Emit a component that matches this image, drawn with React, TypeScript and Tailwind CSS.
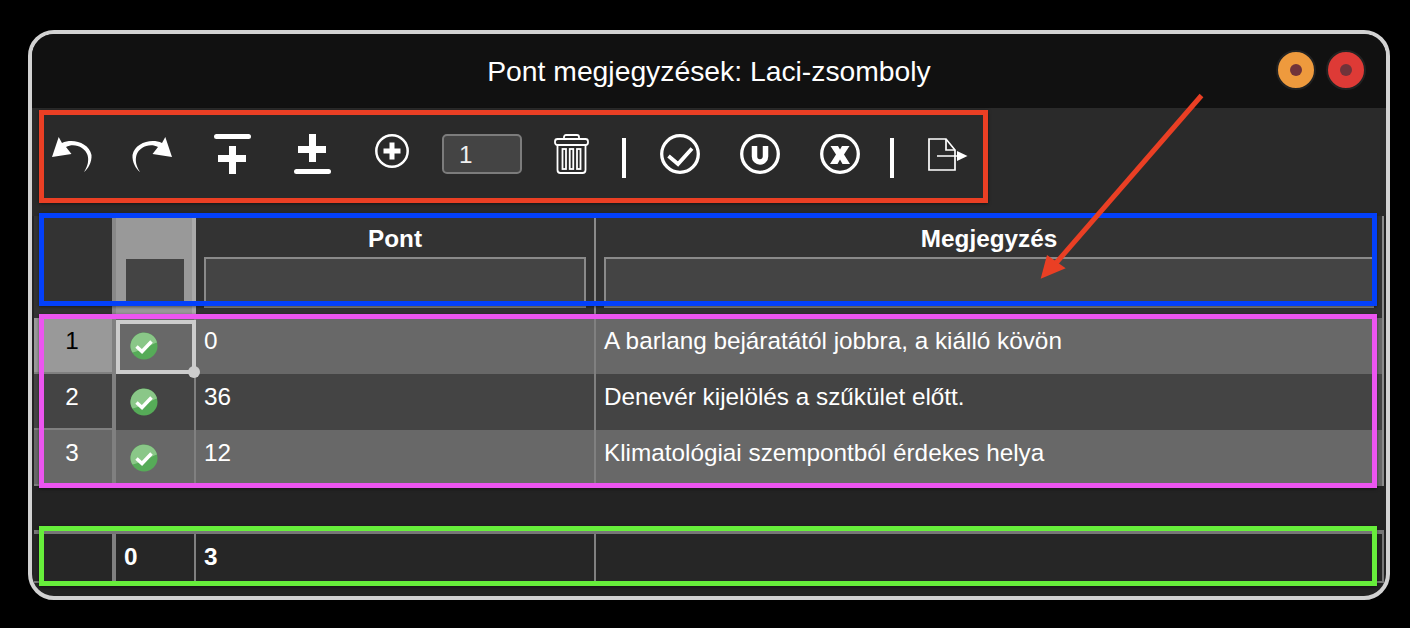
const font = "font-['Liberation_Sans',Arial,sans-serif]";

function Undo({ flip }: { flip?: boolean }) {
  return (
    <svg width="40" height="35" viewBox="0 0 40 35" className={flip ? '-scale-x-100' : ''}>
      <path d="M6.700 0 L10 6 C21 1 37 6 39.500 18 C40 25 36 32 32 35 C36 29 37 23 35.500 18 C33 10 22 5.500 14 10 L19.500 17 L0 20 Z" fill="#fff" />
    </svg>
  );
}

function InsertPlus({ flip }: { flip?: boolean }) {
  return (
    <svg width="37" height="40" viewBox="0 0 37 40" className={flip ? '-scale-y-100' : ''}>
      <rect x="0" y="0" width="37" height="5" rx="2.500" fill="#fff" />
      <path d="M15 12 h7 v9 h10 v7 h-10 V40 h-7 V28 H4 v-7 h11 Z" fill="#fff" />
    </svg>
  );
}

function CirclePlus() {
  return (
    <svg width="34" height="34" viewBox="0 0 34 34">
      <circle cx="17" cy="17" r="15.700" fill="none" stroke="#fff" strokeWidth="2.500" />
      <path d="M14.500 8.500 h5 v6 h6 v5 h-6 v6 h-5 v-6 h-6 v-5 h6 Z" fill="#fff" />
    </svg>
  );
}

function Trash() {
  return (
    <svg width="35" height="40" viewBox="0 0 35 40" fill="none" stroke="#fff" strokeWidth="1.800">
      <path d="M10 5 V3 a2 2 0 0 1 2 -2 h11 a2 2 0 0 1 2 2 V5" />
      <rect x="1" y="5" width="33" height="6" rx="2.500" />
      <path d="M3.500 11 V36 a3 3 0 0 0 3 3 H28.500 a3 3 0 0 0 3 -3 V11" />
      <rect x="8.500" y="15" width="3.500" height="20" />
      <rect x="15.750" y="15" width="3.500" height="20" />
      <rect x="23" y="15" width="3.500" height="20" />
    </svg>
  );
}

function CircleMark({ children }: { children: React.ReactNode }) {
  return (
    <svg width="40" height="40" viewBox="0 0 40 40">
      <circle cx="20" cy="20" r="18.300" fill="none" stroke="#fff" strokeWidth="3.300" />
      {children}
    </svg>
  );
}

function ExportIcon() {
  return (
    <svg width="40" height="33" viewBox="0 0 40 33" fill="none" stroke="#fff" strokeWidth="1.700">
      <path d="M1 1 H18 L27 12 V32 H1 Z" />
      <path d="M18 1 V12 H27" />
      <path d="M9 18 H31" />
      <path d="M29 13 L39.500 18 L29 23 Z" fill="#fff" stroke="none" />
    </svg>
  );
}

function Divider() {
  return <div className="w-[4px] h-[40px] mt-[4px] bg-white" />;
}

function CheckBadge() {
  return (
    <svg width="28" height="28" viewBox="0 0 28 28">
      <circle cx="14" cy="14" r="13.500" fill="#56ab58" />
      <path d="M0.500 14 A13.500 13.500 0 0 1 27 10.500 C20 13 10 19 2.500 20.500 C1 18 0.500 16 0.500 14 Z" fill="#8ac788" />
      <path d="M6.500 14.500 L12 19.500 L21.500 9.500" fill="none" stroke="#fff" strokeWidth="3.500" />
    </svg>
  );
}

function FilterInput() {
  return <div className="h-[51px] bg-[#444444] border-2 border-[#8a8a8a]" />;
}

const rows = [
  { n: '1', pont: '0', note: 'A barlang bejáratától jobbra, a kiálló kövön', bg: 'bg-[#686868]' },
  { n: '2', pont: '36', note: 'Denevér kijelölés a szűkület előtt.', bg: 'bg-[#444444]' },
  { n: '3', pont: '12', note: 'Klimatológiai szempontból érdekes helya', bg: 'bg-[#686868]' },
];

export default function App() {
  return (
    <div className={`${font} relative w-[1410px] h-[628px] bg-black overflow-hidden pt-[30px] pl-[28px]`}>
      <div className="w-[1362px] h-[570px] border-4 border-[#d2d2d2] rounded-[26px] overflow-hidden bg-[#232323] flex flex-col">
        {/* Title */}
        <div className="relative h-[74px] shrink-0 bg-[#111111] flex items-center justify-center text-white text-[28.3px]">
          Pont megjegyzések: Laci-zsomboly
          <div className="absolute right-[20px] top-[16px] flex gap-[10px]">
            <div className="w-[40px] h-[40px] rounded-full bg-[#ee9a3d] border-2 border-[#222222] flex items-center justify-center">
              <div className="w-[12px] h-[12px] rounded-full bg-[#70333a]" />
            </div>
            <div className="w-[40px] h-[40px] rounded-full bg-[#de3a36] border-2 border-[#222222] flex items-center justify-center">
              <div className="w-[12px] h-[12px] rounded-full bg-[#70333a]" />
            </div>
          </div>
        </div>

        {/* Toolbar */}
        <div className="h-[108px] shrink-0 bg-[#2a2a2a] flex items-start text-white pt-[26px]">
          <div className="ml-[20px] mt-[3px]"><Undo /></div>
          <div className="ml-[40px] mt-[3px]"><Undo flip /></div>
          <div className="ml-[42px]"><InsertPlus /></div>
          <div className="ml-[43px]"><InsertPlus flip /></div>
          <div className="ml-[44px]"><CirclePlus /></div>
          <div className="w-[80px] h-[40px] ml-[33px] rounded-[5px] bg-[#444444] border-2 border-[#7c7c7c] flex items-center pl-[15px] pt-[2px] text-[24.3px] text-[#f0f0f0]">1</div>
          <div className="ml-[32px]"><Trash /></div>
          <div className="ml-[33px]"><Divider /></div>
          <div className="ml-[34px]">
            <CircleMark><path d="M8.500 22 L18 30 L32 14.500" fill="none" stroke="#fff" strokeWidth="3.800" /></CircleMark>
          </div>
          <div className="ml-[40px]">
            <CircleMark><path d="M14.500 12 V22.500 a5.500 5.500 0 0 0 11 0 V12" fill="none" stroke="#fff" strokeWidth="5.500" /></CircleMark>
          </div>
          <div className="ml-[40px]">
            <CircleMark><path d="M10.500 12 h7.500 l2 3.500 L22 12 h7.500 L24 20.500 l6 9.500 h-7.500 L20 25.500 L17.500 30 H10 l6 -9.500 Z" fill="#fff" /></CircleMark>
          </div>
          <div className="ml-[30px]"><Divider /></div>
          <div className="ml-[34px] mt-[4px]"><ExportIcon /></div>
        </div>

        {/* Column headers */}
        <div className="h-[102px] shrink-0 flex bg-[#333333] ml-[2px] mr-[2px] border-r-2 border-[#8a8a8a] text-white text-[24.3px] font-bold">
          <div className="w-[78px] shrink-0" />
          <div className="w-[84px] shrink-0 bg-[#999999] border-l-4 border-r-4 border-l-[#888888] border-r-[#aaaaaa] pt-[43px] pl-[10px]">
            <div className="w-[58px] h-[47px] bg-[#444444]" />
          </div>
          <div className="w-[400px] shrink-0 px-[8px] flex flex-col border-r-2 border-[#8a8a8a]">
            <div className="h-[41px] pt-[5px] flex items-center justify-center">Pont</div>
            <FilterInput />
          </div>
          <div className="flex-1 px-[8px] flex flex-col">
            <div className="h-[41px] pt-[5px] flex items-center justify-center">Megjegyzés</div>
            <FilterInput />
          </div>
        </div>

        {/* Rows */}
        <div className="shrink-0 ml-[2px] mr-[2px] border-r-2 border-[#8a8a8a]">
          {rows.map((row, i) => (
            <div key={row.n} className={`h-[56px] flex text-white text-[24.3px] ${row.bg}`}>
              <div className={`w-[78px] shrink-0 flex justify-center pt-[5px] pr-[2px] border-b-2 border-[#808080] ${i === 0 ? 'bg-[#999999] text-black' : ''}`}>{row.n}</div>
              <div className="relative w-[84px] shrink-0 flex pl-[14px] pt-[14px] border-l-4 border-r-2 border-[#808080]">
                <CheckBadge />
                {i === 0 && (
                  <>
                    <div className="absolute left-0 top-[2px] w-[80px] h-[54px] border-4 border-[#cccccc]" />
                    <div className="absolute left-[72px] top-[48px] w-[12px] h-[12px] rounded-full bg-[#cccccc] z-10" />
                  </>
                )}
              </div>
              <div className="w-[400px] shrink-0 pl-[8px] pt-[5px] border-r-2 border-[#808080]">{row.pont}</div>
              <div className="flex-1 pl-[8px] pt-[5px]">{row.note}</div>
            </div>
          ))}
        </div>

        <div className="h-[44px] shrink-0" />

        {/* Summary */}
        <div className="shrink-0 h-[53px] ml-[2px] mr-[2px] border-t-4 border-b-2 border-r-2 border-[#777777] flex text-white text-[24.3px] font-bold bg-[#262626]">
          <div className="w-[78px] shrink-0" />
          <div className="w-[84px] shrink-0 border-l-4 border-r-2 border-[#808080] pl-[8px] flex items-center">0</div>
          <div className="w-[400px] shrink-0 border-r-2 border-[#808080] pl-[8px] flex items-center">3</div>
          <div className="flex-1" />
        </div>
      </div>

      {/* Annotation boxes */}
      <div className="absolute left-[39px] top-[110px] w-[949px] h-[93px] border-[5px] border-[#ea3f24] shadow-[0_1px_3px_rgba(0,0,0,0.5)]" />
      <div className="absolute left-[39px] top-[213px] w-[1338px] h-[93px] border-[5px] border-[#0340fb] shadow-[0_1px_3px_rgba(0,0,0,0.5)]" />
      <div className="absolute left-[39px] top-[314px] w-[1338px] h-[174px] border-[5px] border-[#ec55f0] shadow-[0_1px_3px_rgba(0,0,0,0.5)]" />
      <div className="absolute left-[39px] top-[526px] w-[1338px] h-[60px] border-[5px] border-[#67ee3b] shadow-[0_1px_3px_rgba(0,0,0,0.5)]" />

      {/* Arrow */}
      <svg className="absolute left-0 top-0 pointer-events-none" width="1410" height="628" viewBox="0 0 1410 628">
        <path d="M1201.500 95.500 L1056 263" stroke="#ea3f24" strokeWidth="5" fill="none" />
        <path d="M1040.700 278.700 L1047 255 L1065.700 268.300 Z" fill="#ea3f24" />
      </svg>
    </div>
  );
}
